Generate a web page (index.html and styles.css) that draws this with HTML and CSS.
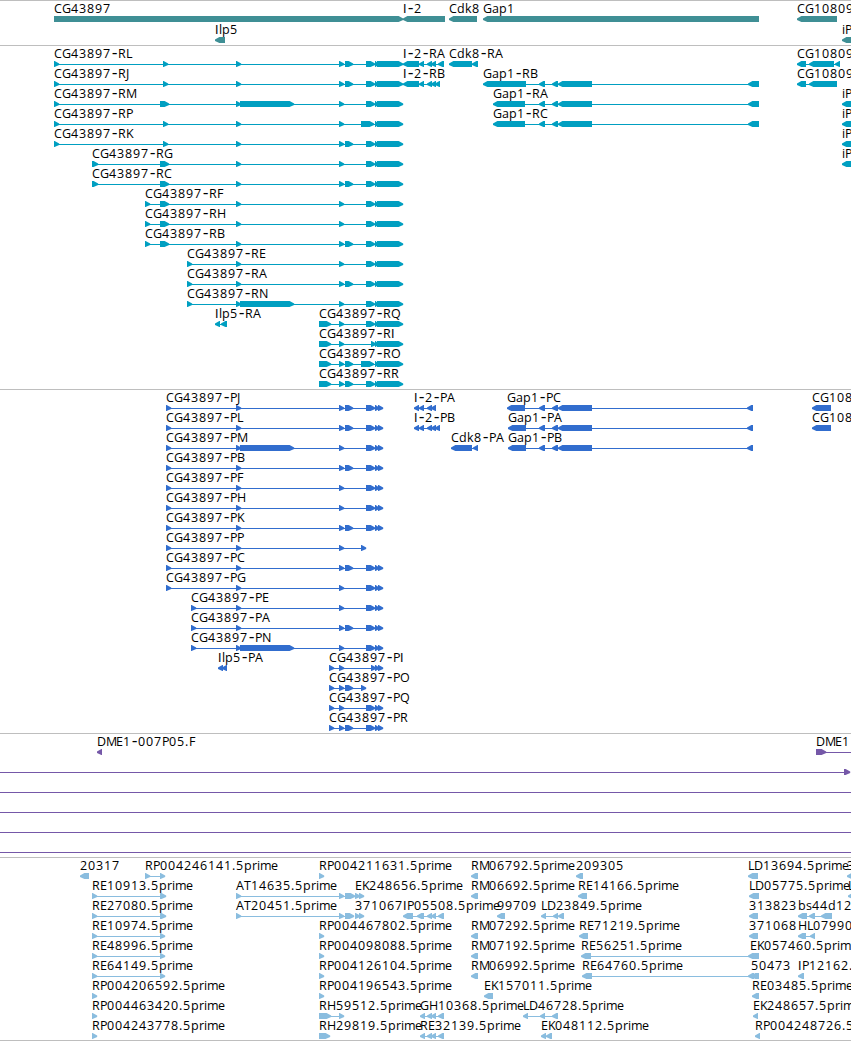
FILE: index.html
```html
<!DOCTYPE html>
<html lang="en">
<head>
    <meta charset="UTF-8">
    <meta name="viewport" content="width=device-width, initial-scale=1.0">
    <title>Genome browser</title>
    <link rel="stylesheet" href="styles.css">
</head>
<body>
    <main class="browser">
        <section class="track track-genes" id="genes"></section>
        <section class="track track-transcripts" id="transcripts"></section>
        <section class="track track-proteins" id="proteins"></section>
        <section class="track track-bacs" id="bacs"></section>
        <section class="track track-ests" id="ests"></section>
    </main>
    <script src="tracks.js"></script>
</body>
</html>
```
FILE: styles.css
```css
body {
    margin: 0;
    background-color: #fff;
    overflow: hidden;
}
.browser {
    display: flex;
    flex-direction: column;
    width: 851px;
    border-bottom: 1px solid #bebebe;
}
.track {
    box-sizing: border-box;
    border-top: 1px solid #bebebe;
    overflow: hidden;
}
.track svg {
    display: block;
}
.label {
    font-family: "Open Sans", "Noto Sans", sans-serif;
    font-size: 12.5px;
    fill: #000;
}
/* wider dash between gene and transcript name */
.dash {
    font-family: "DejaVu Sans", sans-serif;
    font-size: 16px;
}
/* capital I without serifs */
.plain {
    font-family: "Liberation Sans", sans-serif;
}
.track-genes {
    height: 45px;
    color: #3f8f95;
}
.track-transcripts {
    height: 344px;
    color: #009fc1;
}
.track-proteins {
    height: 344px;
    color: #316dce;
}
.track-bacs {
    height: 124px;
    color: #7558a8;
}
.track-ests {
    height: 183px;
    color: #8abddf;
}
```
FILE: tracks.js
```js
const WIDTH = 851;
const HEAD = 5;

// horizontal advance of each character in a label
const ADVANCE = {
    A: 8, B: 7, C: 8, D: 9, E: 7, F: 6, G: 9, H: 9, I: 4, J: 4, K: 7, L: 6, M: 10,
    O: 10, P: 7, Q: 10, R: 8, S: 7, T: 7, a: 7, b: 8, d: 8, e: 7, i: 3, k: 7, l: 3,
    m: 11, p: 8, r: 5, s: 6, '-': 7, '.': 4
};

// exons shared by several forms of one gene
const END = '366-375 375-378 377-403';
const LONG_END = '361-374 375-378 377-403';
const MID = '236-241 339-344';
const MID2 = MID + ' 345-353';
const BIG = '236-241 240-294 339-344';
const PEND = '366-375 375-379 378-383';
const GAP = '539-545 552-558 558-592';

// [row, label, x, direction, exons]
const genes = [
    [0, 'CG43897', 54, 1, '54-403'],
    [0, 'I-2', 403, -1, '403-445'],
    [0, 'Cdk8', 449, -1, '449-477'],
    [0, 'Gap1', 483, -1, '483-759'],
    [0, 'CG10809', 797, -1, '797-837'],
    [1, 'Ilp5', 215, -1, '215-225'],
    [1, 'iPLA2', 842, -1, '842-870']
];

const transcripts = [
    [0, 'CG43897-RL', 54, 1, `54-59 163-168 ${MID2} ${END}`],
    [1, 'CG43897-RJ', 54, 1, `54-59 163-168 ${MID2} ${END}`],
    [2, 'CG43897-RM', 54, 1, `54-59 160-169 ${BIG} ${END}`],
    [3, 'CG43897-RP', 54, 1, `54-59 163-168 ${MID} ${LONG_END}`],
    [4, 'CG43897-RK', 54, 1, `54-59 163-168 ${MID2} ${END}`],
    [5, 'CG43897-RG', 92, 1, `92-98 160-169 ${MID} ${END}`],
    [6, 'CG43897-RC', 92, 1, `92-98 160-169 ${MID2} ${END}`],
    [7, 'CG43897-RF', 145, 1, `145-150 160-169 ${MID} ${END}`],
    [8, 'CG43897-RH', 145, 1, `145-150 160-169 ${MID} ${END}`],
    [9, 'CG43897-RB', 145, 1, `145-150 160-169 ${MID2} ${END}`],
    [10, 'CG43897-RE', 187, 1, `187-192 ${MID} ${END}`],
    [11, 'CG43897-RA', 187, 1, `187-192 ${MID2} ${END}`],
    [12, 'CG43897-RN', 187, 1, `187-192 ${BIG} ${END}`],
    [13, 'Ilp5-RA', 215, -1, '215-220 221-227'],
    [13, 'CG43897-RQ', 319, 1, `319-331 339-344 ${END}`],
    [14, 'CG43897-RI', 319, 1, '319-331 339-344 371-376 375-378 377-403'],
    [15, 'CG43897-RO', 319, 1, `319-331 339-344 345-353 ${LONG_END}`],
    [16, 'CG43897-RR', 319, 1, `319-331 339-344 345-353 ${END}`],
    [0, 'I-2-RA', 403, -1, '403-419 419-424 427-432 431-436 438-444'],
    [1, 'I-2-RB', 403, -1, '403-419 419-424 427-432 431-436 435-440'],
    [0, 'Cdk8-RA', 449, -1, '449-472 472-478'],
    [1, 'Gap1-RB', 483, -1, `483-526 ${GAP} 748-759`],
    [2, 'Gap1-RA', 493, -1, `493-525 ${GAP} 748-759`],
    [3, 'Gap1-RC', 493, -1, `493-525 ${GAP} 748-759`],
    [0, 'CG10809-RA', 797, -1, '797-806 809-834 835-840'],
    [1, 'CG10809-RB', 797, -1, '797-806 809-837'],
    [2, 'iPLA2-RA', 842, -1, '842-870'],
    [3, 'iPLA2-RB', 842, -1, '842-870'],
    [4, 'iPLA2-RC', 842, -1, '842-870'],
    [5, 'iPLA2-RD', 842, -1, '842-870']
];

const proteins = [
    [0, 'CG43897-PJ', 166, 1, `166-171 ${MID2} ${PEND}`],
    [1, 'CG43897-PL', 166, 1, `166-171 ${MID2} ${PEND}`],
    [2, 'CG43897-PM', 166, 1, `166-171 ${BIG} ${PEND}`],
    [3, 'CG43897-PB', 166, 1, `166-171 ${MID2} ${PEND}`],
    [4, 'CG43897-PF', 166, 1, `166-171 ${MID} ${PEND}`],
    [5, 'CG43897-PH', 166, 1, `166-171 ${MID} ${PEND}`],
    [6, 'CG43897-PK', 166, 1, `166-171 ${MID2} ${PEND}`],
    [7, 'CG43897-PP', 166, 1, `166-171 ${MID} 361-366`],
    [8, 'CG43897-PC', 166, 1, `166-171 ${MID2} ${PEND}`],
    [9, 'CG43897-PG', 166, 1, `166-171 ${MID} ${PEND}`],
    [10, 'CG43897-PE', 191, 1, `191-196 ${MID} ${PEND}`],
    [11, 'CG43897-PA', 191, 1, `191-196 ${MID2} ${PEND}`],
    [12, 'CG43897-PN', 191, 1, `191-196 ${BIG} ${PEND}`],
    [13, 'Ilp5-PA', 218, -1, '218-223 222-227'],
    [13, 'CG43897-PI', 329, 1, '329-334 339-344 371-376 375-379 378-383'],
    [14, 'CG43897-PO', 329, 1, '329-334 339-344 345-353 361-366'],
    [15, 'CG43897-PQ', 329, 1, `329-334 339-344 ${PEND}`],
    [16, 'CG43897-PR', 329, 1, `329-334 339-344 345-353 ${PEND}`],
    [0, 'I-2-PA', 414, -1, '414-419 419-424 427-432 431-436'],
    [1, 'I-2-PB', 414, -1, '414-419 419-424 427-432 431-436 435-440'],
    [2, 'Cdk8-PA', 451, -1, '451-472 473-478'],
    [0, 'Gap1-PC', 507, -1, `507-525 ${GAP} 747-753`],
    [1, 'Gap1-PA', 508, -1, `508-526 ${GAP} 747-753`],
    [2, 'Gap1-PB', 508, -1, `508-526 ${GAP} 747-753`],
    [0, 'CG10809-PA', 812, -1, '812-831'],
    [1, 'CG10809-PB', 812, -1, '812-831']
];

const bacs = [
    [0, 'DME1-007P05.F', 97, -1, '97-102'],
    [0, 'DME1', 816, 1, '816-826 900-910'],
    [1, '', 0, 1, '-20--10 844-850'],
    [2, '', 0, 1, '-20--10 900-910'],
    [3, '', 0, 1, '-20--10 900-910'],
    [4, '', 0, 1, '-20--10 900-910'],
    [5, '', 0, 1, '-20--10 900-910']
];

const ests = [
    [0, '20317', 80, -1, '80-89'],
    [0, 'RP004246141.5prime', 145, 1, '145-150 160-165'],
    [0, 'RP004211631.5prime', 319, 1, '319-324'],
    [0, 'RM06792.5prime', 471, -1, '471-478'],
    [0, '209305', 576, -1, '576-583'],
    [0, 'LD13694.5prime', 748, -1, '748-758'],
    [0, '3', 847, -1, '847-860'],
    [1, 'RE10913.5prime', 92, 1, '92-97 160-166'],
    [1, 'AT14635.5prime', 236, 1, '236-241 339-344 345-355'],
    [1, 'EK248656.5prime', 355, 1, '355-360 359-364'],
    [1, 'RM06692.5prime', 471, -1, '471-478'],
    [1, 'RE14166.5prime', 578, -1, '578-587'],
    [1, 'LD05775.5prime', 749, -1, '749-759'],
    [1, 'L', 848, -1, '848-860'],
    [2, 'RE27080.5prime', 92, 1, '92-97 160-166'],
    [2, 'AT20451.5prime', 236, 1, '236-241 339-344 345-354'],
    [2, '371067', 355, 1, '355-360 359-364'],
    [2, 'IP05508.5prime', 403, -1, '403-413 417-424 427-432 431-436 438-444'],
    [2, '99709', 497, -1, '497-505'],
    [2, 'LD23849.5prime', 541, -1, '541-546 553-558 558-564'],
    [2, '313823', 749, -1, '749-758'],
    [2, 'bs44d12', 798, -1, '798-807 809-815 821-832'],
    [3, 'RE10974.5prime', 92, 1, '92-97 160-165'],
    [3, 'RP004467802.5prime', 319, 1, '319-324'],
    [3, 'RM07292.5prime', 471, -1, '471-478'],
    [3, 'RE71219.5prime', 579, -1, '579-588'],
    [3, '371068', 749, -1, '749-758'],
    [3, 'HL07990', 798, -1, '798-806 810-815'],
    [4, 'RE48996.5prime', 92, 1, '92-97 160-165'],
    [4, 'RP004098088.5prime', 319, 1, '319-324'],
    [4, 'RM07192.5prime', 471, -1, '471-478'],
    [4, 'RE56251.5prime', 581, -1, '581-591 748-754 753-759'],
    [4, 'EK057460.5prime', 750, -1, '750-759'],
    [5, 'RE64149.5prime', 92, 1, '92-97 160-165'],
    [5, 'RP004126104.5prime', 319, 1, '319-324'],
    [5, 'RM06992.5prime', 471, -1, '471-478'],
    [5, 'RE64760.5prime', 582, -1, '582-592 748-754 753-759'],
    [5, '50473', 751, -1, '751-759'],
    [5, 'IP12162.5prime', 798, -1, '798-804'],
    [6, 'RP004206592.5prime', 92, 1, '92-97'],
    [6, 'RP004196543.5prime', 319, 1, '319-324'],
    [6, 'EK157011.5prime', 484, -1, '484-493'],
    [6, 'RE03485.5prime', 752, -1, '752-759'],
    [7, 'RP004463420.5prime', 92, 1, '92-97'],
    [7, 'RH59512.5prime', 319, 1, '319-331 339-344'],
    [7, 'GH10368.5prime', 420, -1, '420-425 427-432 431-436 438-444'],
    [7, 'LD46728.5prime', 523, -1, '523-528 540-545 552-558'],
    [7, 'EK248657.5prime', 753, -1, '753-758'],
    [8, 'RP004243778.5prime', 92, 1, '92-97'],
    [8, 'RH29819.5prime', 319, 1, '319-330'],
    [8, 'RE32139.5prime', 420, -1, '420-425 427-432 431-436 438-444'],
    [8, 'EK048112.5prime', 541, -1, '541-546 546-552'],
    [8, 'RP004248726.5prime', 755, -1, '755-760']
];

// exon box, pointed at the end it is read towards
function exon(start, end, top, direction) {
    const bottom = top + 6;
    if (direction > 0) {
        const neck = Math.max(start, end - HEAD) + 0.6;
        const tip = end + 0.2;
        return `<polygon points="${start},${top} ${neck},${top} ${tip},${top + 2.4} ${tip},${top + 4} ${neck},${bottom} ${start},${bottom}"/>`;
    }
    const neck = Math.min(end, start + HEAD) - 0.6;
    const tip = start;
    return `<polygon points="${end},${top} ${neck},${top} ${tip},${top + 2.4} ${tip},${top + 4} ${neck},${bottom} ${end},${bottom}"/>`;
}

// one run per label, with an x for each character in it
function label(text, x, y) {
    let out = '';
    for (const char of text) {
        if (char === '-') {
            out += `<tspan class="dash" x="${x + 0.7}">-</tspan>`;
        } else if (char === 'I') {
            out += `<tspan class="plain" x="${x}">I</tspan>`;
        } else {
            out += `<tspan x="${x}">${char}</tspan>`;
        }
        x += ADVANCE[char] || 8;
    }
    return `<text class="label" y="${y}">${out}</text>`;
}

function drawTrack(id, features, pitch) {
    const section = document.getElementById(id);
    const height = section.clientHeight;
    let shapes = '';
    let labels = '';
    for (const [row, name, x, direction, list] of features) {
        const y = row * pitch;
        const exons = list.split(' ').map(part => part.match(/^(-?\d+)-(-?\d+)$/).slice(1).map(Number));
        const first = exons[0][0];
        const last = exons[exons.length - 1][1];
        shapes += `<rect x="${first}" y="${y + 18}" width="${last - first}" height="1"/>`;
        for (const [start, end] of exons) {
            shapes += exon(start, end, y + 15, direction);
        }
        if (name) {
            labels += label(name, x, y + 12);
        }
    }
    section.innerHTML = `<svg width="${WIDTH}" height="${height}" viewBox="0 0 ${WIDTH} ${height}">
        <g fill="currentColor">${shapes}</g>${labels}</svg>`;
}

drawTrack('genes', genes, 21);
drawTrack('transcripts', transcripts, 20);
drawTrack('proteins', proteins, 20);
drawTrack('bacs', bacs, 20);
drawTrack('ests', ests, 20);
```
